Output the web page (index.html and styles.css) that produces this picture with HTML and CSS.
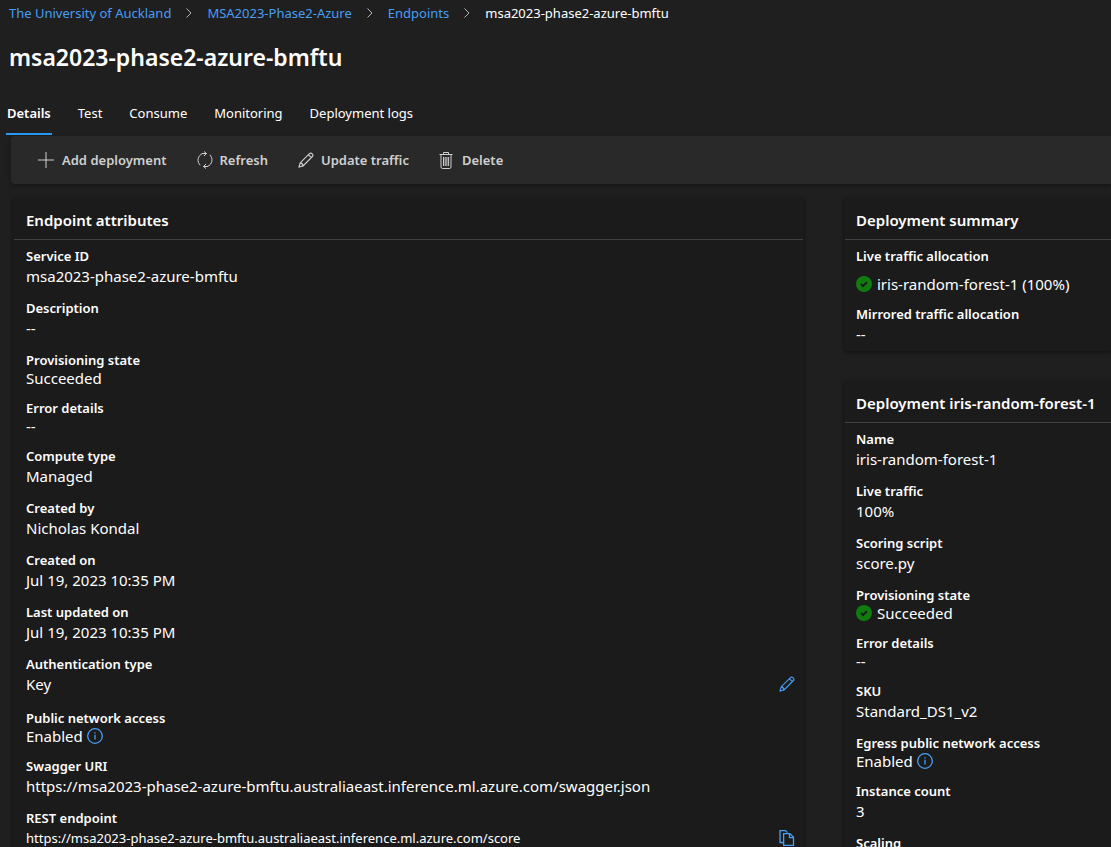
FILE: index.html
```html
<!DOCTYPE html>
<html lang="en">
<head>
<meta charset="utf-8">
<meta name="viewport" content="width=device-width, initial-scale=1">
<title>msa2023-phase2-azure-bmftu</title>
<link rel="stylesheet" href="styles.css">
</head>
<body>
<svg class="sprite" aria-hidden="true">
  <symbol id="chevron" viewBox="0 0 8 12"><path d="M1.500 1.500l4.500 4.500-4.500 4.500"/></symbol>
  <symbol id="plus" viewBox="0 0 18 18"><path d="M9 1v16M1 9h16"/></symbol>
  <symbol id="refresh" viewBox="0 0 16 18"><path d="M3.200 14.200A7 7 0 0 1 5.500 2.600M12.800 3.800A7 7 0 0 1 10.500 15.400M5 2.500h4.500M7 .5l2.500 2L7 5M11 15.500H6.500M9 13l-2.500 2.500L9 17.500"/></symbol>
  <symbol id="pencil" viewBox="0 0 18 18"><path d="M1.200 16.800l1.200-4.500L12.900 1.800a1.900 1.900 0 0 1 2.700 0l.6.600a1.900 1.900 0 0 1 0 2.700L5.700 15.600zM2.400 12.300c1.600.2 3 1.600 3.300 3.300M11.700 3l3.300 3.300"/></symbol>
  <symbol id="trash" viewBox="0 0 14 17"><path d="M.5 2.500h13M4.500 2.500v-2h5v2M2 2.500v12.500q0 1.500 1.500 1.500h7q1.500 0 1.500-1.500V2.500M4.500 5v9M6.200 5v9M7.900 5v9M9.600 5v9"/></symbol>
  <symbol id="info" viewBox="0 0 16 16"><circle cx="8" cy="8" r="7.300"/><path d="M8 6.800v4.700M8 4.200v1.300"/></symbol>
  <symbol id="copy" viewBox="0 0 16 16"><path d="M4.500 12.500H1V.6h5.500l2 2M4.600 3.600h6.200l3.700 3.700v8.100H4.600zM10.500 3.600v4h4"/></symbol>
  <symbol id="check" viewBox="0 0 16 16"><circle cx="8" cy="8" r="8"/><path d="M5 8l2 2 4-3.800"/></symbol>
</svg>

<header class="page-header">
  <nav aria-label="Breadcrumb">
    <ol class="breadcrumb">
      <li><a href="#">The University of Auckland</a><svg class="chevron"><use href="#chevron"/></svg></li>
      <li><a href="#">MSA2023-Phase2-Azure</a><svg class="chevron"><use href="#chevron"/></svg></li>
      <li><a href="#">Endpoints</a><svg class="chevron"><use href="#chevron"/></svg></li>
      <li aria-current="page">msa2023-phase2-azure-bmftu</li>
    </ol>
  </nav>
  <h1 class="title">msa2023-phase2-azure-bmftu</h1>
</header>

<div class="tabs" role="tablist">
  <button class="tab active" role="tab" aria-selected="true">Details</button>
  <button class="tab" role="tab">Test</button>
  <button class="tab" role="tab">Consume</button>
  <button class="tab" role="tab">Monitoring</button>
  <button class="tab" role="tab">Deployment logs</button>
</div>

<div class="toolbar" role="toolbar">
  <button class="command"><svg class="icon-plus"><use href="#plus"/></svg>Add deployment</button>
  <button class="command"><svg class="icon-refresh"><use href="#refresh"/></svg>Refresh</button>
  <button class="command"><svg class="icon-pencil"><use href="#pencil"/></svg>Update traffic</button>
  <button class="command command-delete"><svg class="icon-trash"><use href="#trash"/></svg>Delete</button>
</div>

<main class="columns">
  <section class="card">
    <h2 class="card-title">Endpoint attributes</h2>
    <dl class="attributes">
      <div><dt>Service ID</dt><dd>msa2023-phase2-azure-bmftu</dd></div>
      <div><dt>Description</dt><dd>--</dd></div>
      <div><dt>Provisioning state</dt><dd class="compact">Succeeded</dd></div>
      <div><dt>Error details</dt><dd class="compact">--</dd></div>
      <div><dt>Compute type</dt><dd>Managed</dd></div>
      <div><dt>Created by</dt><dd>Nicholas Kondal</dd></div>
      <div><dt>Created on</dt><dd>Jul 19, 2023 10:35 PM</dd></div>
      <div><dt>Last updated on</dt><dd>Jul 19, 2023 10:35 PM</dd></div>
      <div><dt>Authentication type</dt><dd class="with-action">Key<button class="icon-button" aria-label="Edit authentication type"><svg class="icon-pencil"><use href="#pencil"/></svg></button></dd></div>
      <div><dt>Public network access</dt><dd class="compact">Enabled<svg class="icon-info"><use href="#info"/></svg></dd></div>
      <div><dt>Swagger URI</dt><dd>https://msa2023-phase2-azure-bmftu.australiaeast.inference.ml.azure.com/swagger.json</dd></div>
      <div><dt>REST endpoint</dt><dd class="with-action small">https://msa2023-phase2-azure-bmftu.australiaeast.inference.ml.azure.com/score<button class="icon-button" aria-label="Copy REST endpoint"><svg class="icon-copy"><use href="#copy"/></svg></button></dd></div>
    </dl>
  </section>

  <div class="side">
    <section class="card">
      <h2 class="card-title">Deployment summary</h2>
      <dl class="attributes summary">
        <div><dt>Live traffic allocation</dt><dd class="allocation"><svg class="icon-check"><use href="#check"/></svg>iris-random-forest-1 (100%)</dd></div>
        <div><dt>Mirrored traffic allocation</dt><dd>--</dd></div>
      </dl>
    </section>
    <section class="card">
      <h2 class="card-title">Deployment iris-random-forest-1</h2>
      <dl class="attributes">
        <div><dt>Name</dt><dd>iris-random-forest-1</dd></div>
        <div><dt>Live traffic</dt><dd>100%</dd></div>
        <div><dt>Scoring script</dt><dd>score.py</dd></div>
        <div><dt>Provisioning state</dt><dd class="compact"><svg class="icon-check"><use href="#check"/></svg>Succeeded</dd></div>
        <div><dt>Error details</dt><dd class="compact">--</dd></div>
        <div><dt>SKU</dt><dd>Standard_DS1_v2</dd></div>
        <div><dt>Egress public network access</dt><dd class="compact">Enabled<svg class="icon-info"><use href="#info"/></svg></dd></div>
        <div><dt>Instance count</dt><dd>3</dd></div>
        <div><dt>Scaling</dt></div>
      </dl>
    </section>
  </div>
</main>
</body>
</html>
```
FILE: styles.css
```css
* { box-sizing: border-box; }

html, body { height: 100%; }

body {
  margin: 0;
  display: flex;
  flex-direction: column;
  overflow: hidden;
  background: #1f1f1f;
  color: #fff;
  font-family: "Segoe UI", "Noto Sans", "Open Sans", sans-serif;
  font-size: 13px;
  line-height: 20px;
}

body > * { flex-shrink: 0; }

button {
  border: 0;
  padding: 0;
  background: none;
  color: inherit;
  font: inherit;
}

svg {
  flex: none;
  fill: none;
  stroke: currentColor;
}

.sprite { position: absolute; width: 0; height: 0; }

.page-header { padding: 3px 9px 0; }

.breadcrumb {
  display: flex;
  margin: 0;
  padding: 0;
  list-style: none;
}

.breadcrumb li { display: flex; align-items: center; white-space: nowrap; }
.breadcrumb a { color: #479ef5; text-decoration: none; }
.chevron { width: 8px; height: 12px; margin: 0 14px; color: #b4b4b4; }

.title {
  margin: 18px 0 0;
  font-size: 23px;
  line-height: 32px;
  font-weight: 600;
}

.tabs {
  display: flex;
  gap: 25px;
  margin-top: 18px;
  padding-left: 6px;
}

.tab {
  height: 44px;
  padding: 2px 1px 0;
  border-bottom: 2px solid transparent;
}

.tab.active { border-color: #2899f5; font-weight: 600; }

.toolbar {
  display: flex;
  gap: 30px;
  height: 48px;
  margin: 1px 0 0 11px;
  padding-left: 26px;
  border-radius: 4px 0 0 4px;
  background: #292929;
  box-shadow: 0 2px 4px rgba(0, 0, 0, 0.3);
  color: #d0d0d0;
}

.command {
  display: flex;
  align-items: center;
  gap: 7px;
  font-weight: 600;
}

.command-delete { gap: 9px; }

.icon-plus { width: 18px; height: 18px; }
.icon-pencil { width: 16px; height: 16px; stroke-width: 1.3; }
.icon-refresh { width: 16px; height: 18px; }
.icon-trash { width: 14px; height: 17px; }
.icon-info, .icon-check, .icon-copy { width: 16px; height: 16px; }
.icon-info, .icon-copy { stroke-width: 1.3; }
.icon-info { margin-left: 4px; color: #479ef5; }
.icon-check { margin-right: 5px; fill: #107c10; stroke: none; }
#check path { fill: none; stroke: #1b1b1b; stroke-width: 2; }

.columns {
  display: grid;
  grid-template-columns: 791fr 267fr;
  gap: 40px;
  margin: 14px 0 0 13px;
}

.side {
  display: flex;
  flex-direction: column;
  gap: 30px;
  min-width: 0;
}

.card {
  min-width: 0;
  padding: 0 1px;
  border-radius: 2px;
  background: #1b1b1b;
  box-shadow: 0 1px 4px rgba(0, 0, 0, 0.5);
}

.side .card { padding-right: 0; }

.card-title {
  margin: 0;
  padding: 12px 0 9px 12px;
  border-bottom: 1px solid #404040;
  font-size: 15px;
  line-height: 20px;
  font-weight: 600;
  white-space: nowrap;
}

.attributes {
  display: flex;
  flex-direction: column;
  gap: 10px;
  margin: 0;
  padding: 6px 8px 10px 12px;
}

.side .card-title, .side .attributes { padding-left: 11px; }

.summary { padding-bottom: 5px; }

dt { font-weight: 600; white-space: nowrap; }

dd {
  display: flex;
  align-items: center;
  margin: 0;
  padding-bottom: 2px;
  font-size: 15px;
  line-height: 20px;
  white-space: nowrap;
}

.compact { line-height: 16px; }
.allocation { padding: 8px 0 0; }
.with-action { justify-content: space-between; padding-bottom: 4px; }
.small { font-size: 13px; padding-top: 0; }

.icon-button { display: flex; color: #479ef5; }
```
